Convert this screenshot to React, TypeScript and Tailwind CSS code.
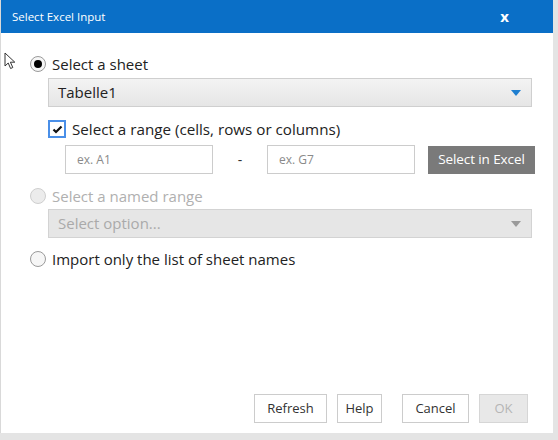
import React from "react";

const font = { fontFamily: '"Open Sans", "Noto Sans", sans-serif' };

function Radio({ checked, disabled }: { checked?: boolean; disabled?: boolean }) {
  return (
    <div
      className={
        "w-[16px] h-[16px] rounded-full border flex items-center justify-center " +
        (disabled ? "border-[#cfcfcf] bg-[#ececec]" : "border-[#9a9a9a] bg-[#f6f6f6]")
      }
    >
      {checked && <div className="w-[8px] h-[8px] rounded-full bg-black" />}
    </div>
  );
}

function Caret({ color }: { color: string }) {
  return (
    <svg width="10" height="6" viewBox="0 0 10 6">
      <path d="M0 0 L10 0 L5 6 Z" fill={color} />
    </svg>
  );
}

export default function App() {
  return (
    <div className="w-[558px] h-[440px] bg-[#e4e4e4] overflow-hidden" style={font}>
      <div className="w-[553px] h-[433px] bg-white flex flex-col border-l border-[#d9d9d9]">
        <div className="h-[33px] bg-[#0a6fc7] flex items-center justify-between pl-[11px] pr-[44px] shrink-0">
          <span className="text-white text-[11.5px]">Select Excel Input</span>
          <span className="text-white text-[15px] font-bold leading-none">x</span>
        </div>
        <div className="relative flex flex-col flex-1 pt-[21px]">
          <svg className="absolute left-[3px] top-[19px]" width="14" height="18" viewBox="0 0 14 18">
            <path d="M1 1 L1 14 L4.2 11 L6.6 16.5 L8.8 15.5 L6.4 10.2 L10.8 10.2 Z" fill="white" stroke="#333" strokeWidth="1" strokeLinejoin="round" />
          </svg>
          <div className="flex items-center h-[20px] pl-[29px] gap-[6px]">
            <Radio checked />
            <span className="text-[15px] text-[#222]">Select a sheet</span>
          </div>
          <div className="ml-[47px] mt-[4px] w-[484px] h-[29px] border border-[#cfcfcf] bg-gradient-to-b from-[#f3f3f3] to-[#e6e6e6] flex items-center justify-between pl-[9px] pr-[10px]">
            <span className="text-[15px] text-[#222]">Tabelle1</span>
            <Caret color="#1f7fd0" />
          </div>
          <div className="flex items-center h-[18px] mt-[13px] pl-[47px] gap-[6px]">
            <div className="w-[18px] h-[18px] border-2 border-[#4a8fe8] flex items-center justify-center bg-white">
              <svg width="11" height="9" viewBox="0 0 11 9">
                <path d="M1.5 4.5 L4 7 L9.5 1.5" fill="none" stroke="#111" strokeWidth="2.2" />
              </svg>
            </div>
            <span className="text-[15.2px] text-[#222]">Select a range (cells, rows or columns)</span>
          </div>
          <div className="flex items-center mt-[7px] pl-[64px]">
            <div className="w-[148px] h-[29px] border border-[#cccccc] flex items-center pl-[11px]">
              <span className="text-[12px] text-[#8a8a8a]">ex. A1</span>
            </div>
            <div className="w-[54px] text-center text-[14px] text-[#333]">-</div>
            <div className="w-[148px] h-[29px] border border-[#cccccc] flex items-center pl-[11px]">
              <span className="text-[12px] text-[#8a8a8a]">ex. G7</span>
            </div>
            <div className="ml-[13px] w-[107px] h-[28px] bg-[#7a7a7a] flex items-center justify-center">
              <span className="text-[13.5px] text-white tracking-[-0.1px]">Select in Excel</span>
            </div>
          </div>
          <div className="flex items-center h-[20px] mt-[12px] pl-[29px] gap-[6px]">
            <Radio disabled />
            <span className="text-[15px] text-[#b0b0b0]">Select a named range</span>
          </div>
          <div className="ml-[47px] mt-[3px] w-[484px] h-[29px] border border-[#d3d3d3] bg-[#e6e6e6] flex items-center justify-between pl-[9px] pr-[10px]">
            <span className="text-[15px] text-[#aaaaaa]">Select option...</span>
            <Caret color="#9a9a9a" />
          </div>
          <div className="flex items-center h-[20px] mt-[11px] pl-[29px] gap-[6px]">
            <Radio />
            <span className="text-[15px] text-[#222]">Import only the list of sheet names</span>
          </div>
          <div className="flex-1" />
          <div className="flex justify-end pr-[25px] pb-[10px] text-[13px] text-[#333]">
            <div className="w-[73px] h-[29px] border border-[#cccccc] flex items-center justify-center">Refresh</div>
            <div className="ml-[10px] w-[45px] h-[29px] border border-[#cccccc] flex items-center justify-center">Help</div>
            <div className="ml-[20px] w-[67px] h-[29px] border border-[#cccccc] flex items-center justify-center">Cancel</div>
            <div className="ml-[10px] w-[49px] h-[29px] border border-[#d6d6d6] bg-[#e8e8e8] text-[#b5b5b5] flex items-center justify-center">OK</div>
          </div>
        </div>
      </div>
    </div>
  );
}
